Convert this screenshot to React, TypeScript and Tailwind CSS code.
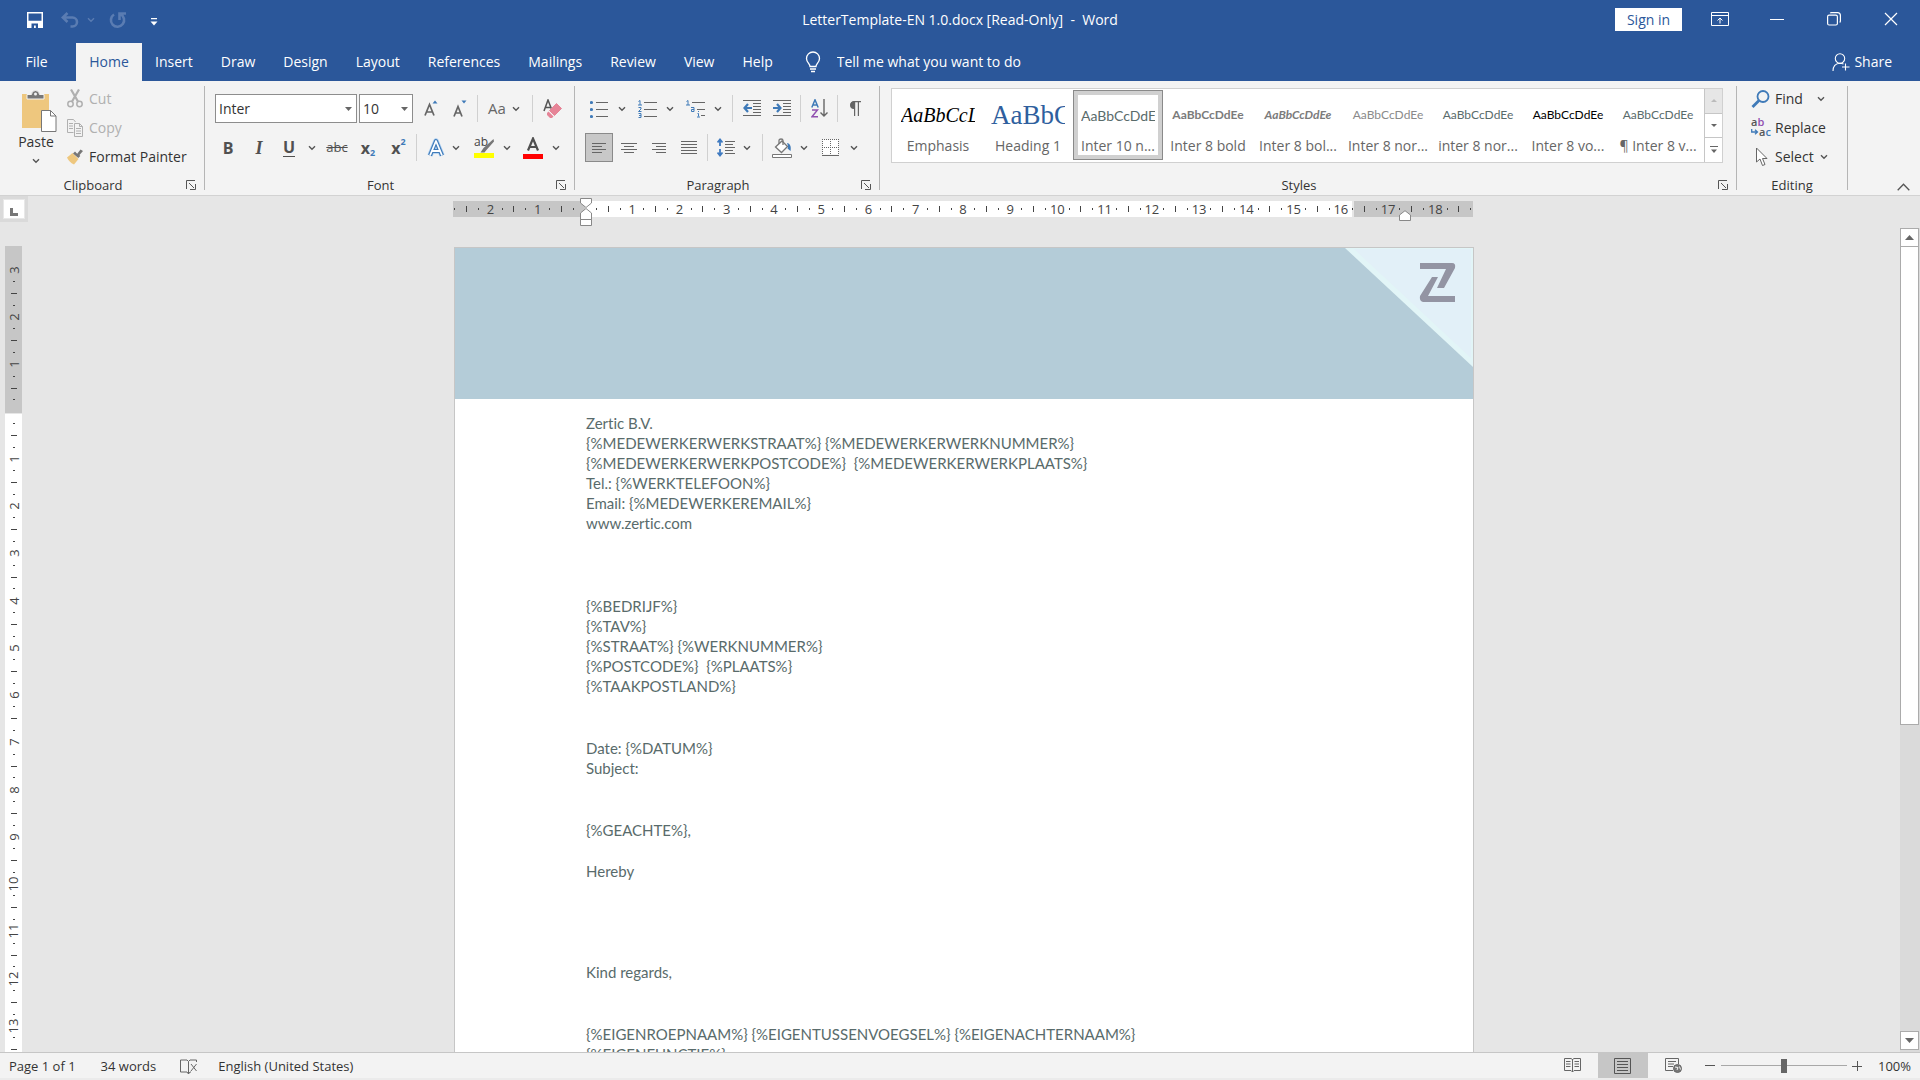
import type { ReactNode } from "react";
import { clsx } from "clsx";

const tabs = ["Insert", "Draw", "Design", "Layout", "References", "Mailings", "Review", "View", "Help"];

const styleItems = [
  { name: "Emphasis", sample: "AaBbCcLl", look: "font-['Liberation_Serif',serif] italic text-[20px] text-black" },
  { name: "Heading 1", sample: "AaBbCc", look: "font-['Liberation_Serif',serif] text-[27px] text-[#2f5f9e]" },
  { name: "Inter 10 n...", sample: "AaBbCcDdEe", look: "font-[Lato,sans-serif] text-[14px] text-[#596b6b]", active: true },
  { name: "Inter 8 bold", sample: "AaBbCcDdEe", look: "justify-center font-[Lato,sans-serif] text-[12px] font-bold text-[#7b7b7b]" },
  { name: "Inter 8 bol...", sample: "AaBbCcDdEe", look: "justify-center font-[Lato,sans-serif] text-[12px] font-bold italic text-[#7b7b7b]" },
  { name: "Inter 8 nor...", sample: "AaBbCcDdEe", look: "justify-center font-[Lato,sans-serif] text-[12px] text-[#8a8a8a]" },
  { name: "inter 8 nor...", sample: "AaBbCcDdEe", look: "justify-center font-[Lato,sans-serif] text-[12px] text-[#596b6b]" },
  { name: "Inter 8 vo...", sample: "AaBbCcDdEe", look: "justify-center font-[Lato,sans-serif] text-[12px] text-black" },
  { name: "¶ Inter 8 v...", sample: "AaBbCcDdEe", look: "justify-center font-[Lato,sans-serif] text-[12px] text-[#596b6b]" },
];

const letter = [
  {
    gap: "mt-0",
    lines: [
      "Zertic B.V.",
      "{%MEDEWERKERWERKSTRAAT%} {%MEDEWERKERWERKNUMMER%}",
      "{%MEDEWERKERWERKPOSTCODE%}  {%MEDEWERKERWERKPLAATS%}",
      "Tel.: {%WERKTELEFOON%}",
      "Email: {%MEDEWERKEREMAIL%}",
      "www.zertic.com",
    ],
  },
  {
    gap: "mt-[63px]",
    lines: [
      "{%BEDRIJF%}",
      "{%TAV%}",
      "{%STRAAT%} {%WERKNUMMER%}",
      "{%POSTCODE%}  {%PLAATS%}",
      "{%TAAKPOSTLAND%}",
    ],
  },
  { gap: "mt-[42px]", lines: ["Date: {%DATUM%}", "Subject:"] },
  { gap: "mt-[42px]", lines: ["{%GEACHTE%},"] },
  { gap: "mt-[21px]", lines: ["Hereby"] },
  { gap: "mt-[81px]", lines: ["Kind regards,"] },
  {
    gap: "mt-[42px]",
    lines: ["{%EIGENROEPNAAM%} {%EIGENTUSSENVOEGSEL%} {%EIGENACHTERNAAM%}", "{%EIGENFUNCTIE%}"],
  },
];

// quarter-centimetre marks, counted from the margin
function marks(from: number, count: number) {
  return Array.from({ length: count }, (_, i) => {
    const q = from + i;
    if (q === 0) return "";
    if (q % 4 === 0) return String(Math.abs(q / 4));
    return q % 2 === 0 ? "|" : ".";
  });
}

const hMarks = marks(-11, 87);
const vMarks = marks(-12, 67);

function Chevron({ className = "text-[#555]" }: { className?: string }) {
  return (
    <svg width="8" height="6" viewBox="0 0 8 6" className={className} fill="none" stroke="currentColor" strokeWidth="1.4">
      <path d="M1 1.2l3 3 3-3" />
    </svg>
  );
}

function Drop({ label, className = "w-3.5" }: { label: string; className?: string }) {
  return (
    <button aria-label={label} className={clsx("flex h-[29px] shrink-0 items-center justify-center", className)}>
      <Chevron />
    </button>
  );
}

function Tool({ label, className = "w-[30px]", children }: { label: string; className?: string; children: ReactNode }) {
  return (
    <button aria-label={label} className={clsx("flex h-[29px] shrink-0 items-center justify-center text-[#505050]", className)}>
      {children}
    </button>
  );
}

function Sep({ className }: { className: string }) {
  return <span className={clsx("h-[27px] w-px shrink-0 bg-[#d0d0d0]", className)} />;
}

function Group({ label, className, launcher = true, children }: { label: string; className: string; launcher?: boolean; children: ReactNode }) {
  return (
    <section className={clsx("flex", className)}>
      <div className="flex min-w-0 flex-1 flex-col">
        <div className="h-[94px]">{children}</div>
        <div className="flex h-5 items-center">
          <span className="flex-1 text-center text-[13px] leading-5 text-[#333]">{label}</span>
          {launcher && (
            <button aria-label={`${label} settings`} className="flex w-[18px] text-[#555]">
              <svg width="10" height="10" viewBox="0 0 10 10" fill="none" stroke="currentColor">
                <path d="M.5 9V.5H9M3 3l5 5M9.500 4v5.500H4" />
              </svg>
            </button>
          )}
        </div>
      </div>
      <span className="mt-[5px] h-[104px] w-px bg-[#b5b5b5]" />
    </section>
  );
}

function TitleBar() {
  return (
    <div className="grid h-[43px] grid-cols-[1fr_auto_1fr] items-start text-sm">
      <div className="flex h-10 items-center pl-[27px]">
        <button aria-label="Save">
          <svg width="16" height="16" viewBox="0 0 16 16" fill="none" stroke="#fff" strokeWidth="1.500">
            <path d="M.75.75h14.500v14.500H.75zM1 9.500h14" />
            <path d="M1 10h14v5H1z" fill="#fff" stroke="none" />
            <path d="M4.500 11.500h6.500V16H8.800v-2.500H7V16H4.500z" fill="#2b579a" stroke="none" />
          </svg>
        </button>
        <button aria-label="Undo" className="ml-[18px] text-[#5a7cb2]">
          <svg width="18" height="16" viewBox="0 0 18 16" fill="none" stroke="currentColor" strokeWidth="2.600">
            <path d="M6.500 1L1.800 5.500l4.700 4.500M2 5.500h9.500a4.500 4.500 0 0 1 0 9H9.500" />
          </svg>
        </button>
        <button aria-label="Undo list" className="ml-2">
          <Chevron className="text-[#5a7cb2]" />
        </button>
        <button aria-label="Repeat" className="ml-[14px] text-[#5a7cb2]">
          <svg width="18" height="17" viewBox="0 0 18 17" fill="none" stroke="currentColor" strokeWidth="2.600">
            <path d="M5 2.500a6.600 6.600 0 1 0 6.500-.3M10.500 8V1.500H17" />
          </svg>
        </button>
        <button aria-label="Customize toolbar" className="ml-[23px] mt-1">
          <svg width="8" height="8" viewBox="0 0 8 8" fill="#fff">
            <path d="M1 0h6v1.300H1zM.5 3.500h7L4 7.500z" />
          </svg>
        </button>
      </div>
      <h1 className="h-10 whitespace-pre leading-10">LetterTemplate-EN 1.0.docx [Read-Only]  -  Word</h1>
      <div className="flex h-[38px] items-center justify-end pr-[22px]">
        <button className="h-[23px] w-[67px] bg-white text-center leading-[23px] text-[#2b579a]">Sign in</button>
        <button aria-label="Ribbon display options" className="ml-[29px]">
          <svg width="18" height="14" viewBox="0 0 18 14" fill="none" stroke="#fff">
            <path d="M.5.5h17v13H.5zM.5 3.500h17M9 11.500V6M6.500 8.500L9 6l2.500 2.500" />
          </svg>
        </button>
        <button aria-label="Minimize" className="ml-[41px] h-3 w-3.5">
          <span className="block h-px w-full bg-white" />
        </button>
        <button aria-label="Restore" className="ml-[43px]">
          <svg width="14" height="14" viewBox="0 0 14 14" fill="none" stroke="#fff" strokeWidth="1.200">
            <rect x=".6" y="3.200" width="9.800" height="9.800" rx="1.500" />
            <path d="M3.200 1.200c.3-.4.800-.6 1.300-.6h6c1.600 0 2.900 1.300 2.900 2.900v5.500c0 .6-.3 1.100-.7 1.400" />
          </svg>
        </button>
        <button aria-label="Close" className="ml-[43px]">
          <svg width="14" height="14" viewBox="0 0 14 14" stroke="#fff" strokeWidth="1.200">
            <path d="M1 1l12 12M13 1L1 13" />
          </svg>
        </button>
      </div>
    </div>
  );
}

function TabBar() {
  return (
    <nav className="flex h-[38px] items-center pr-7 text-sm">
      <button className="w-[76px] pr-[3px] text-center">File</button>
      <button className="h-full w-[66px] bg-[#f3f3f3] text-center text-[#2b579a]">Home</button>
      <div className="flex gap-7 pl-[13px]">
        {tabs.map((tab) => (
          <button key={tab}>{tab}</button>
        ))}
      </div>
      <label htmlFor="tell-me" className="ml-8">
        <span className="sr-only">Tell me what you want to do</span>
        <svg width="16" height="22" viewBox="0 0 16 22" fill="none" stroke="#fff" strokeWidth="1.300">
          <path d="M5 15.500c0-3-3.500-4-3.500-8a6.500 6.500 0 0 1 13 0c0 4-3.500 5-3.500 8zM5 18h6M6 20.500h4" />
        </svg>
      </label>
      <input
        id="tell-me"
        placeholder="Tell me what you want to do"
        className="ml-4 w-60 bg-transparent outline-none placeholder:text-white"
      />
      <button className="ml-auto flex items-center gap-1">
        <svg width="18" height="18" viewBox="0 0 18 18" fill="none" stroke="#fff" strokeWidth="1.100">
          <circle cx="8" cy="5.500" r="4.700" />
          <path d="M1 18c0-4.500 2.500-7.500 7-7.800 1.500 0 2.500.3 3.500.8M13.500 10.500v7M10 14h7.500" />
        </svg>
        Share
      </button>
    </nav>
  );
}

function Clipboard() {
  return (
    <Group label="Clipboard" className="w-[205px]">
      <div className="flex pt-[3px]">
        <button className="ml-[11px] flex w-[50px] flex-col items-center pt-1.5 text-sm leading-5 text-[#333]">
          <svg width="36" height="42" viewBox="0 0 36 42" className="ml-1.5">
            <path d="M1 4h27v34H1z" fill="#eec77e" />
            <path d="M6 9V4.500h4.500a4 4 0 0 1 8 0H23V9z" fill="#777" stroke="#f3f3f3" strokeWidth="1" />
            <circle cx="14.500" cy="4" r="1.500" fill="#f3f3f3" />
            <path d="M20.500 20.500h9l5.500 5.500v15.500H20.500z" fill="#fff" stroke="#777" />
            <path d="M29.500 20.500V26H35" fill="none" stroke="#777" />
          </svg>
          Paste
          <span className="mt-1.5">
            <Chevron />
          </span>
        </button>
        <div className="ml-1.5 flex flex-col text-sm">
          <button className="flex h-[29px] items-center gap-1.5 text-[#b0b0b0]" disabled>
            <svg width="16" height="19" viewBox="0 0 16 19" fill="none" stroke="currentColor" strokeWidth="1.500">
              <circle cx="3.500" cy="15" r="2.700" />
              <circle cx="12.500" cy="15" r="2.700" />
              <path d="M5 12.500L12 .5M11 12.500L4 .5" strokeWidth="2.200" />
            </svg>
            Cut
          </button>
          <button className="flex h-[29px] items-center gap-1.5 text-[#b0b0b0]" disabled>
            <svg width="16" height="18" viewBox="0 0 16 18" fill="none" stroke="currentColor">
              <path d="M6.500 13.500h-6V.5h6l2 2.500M2 4.500h4M2 7h4M2 9.500h4" />
              <path d="M7.500 4.500h5l3 3v10h-8zM12.500 4.500v3h3M9 9.500h5M9 12h5M9 14.500h5" />
            </svg>
            Copy
          </button>
          <button className="flex h-[29px] items-center gap-1.5 whitespace-nowrap text-[#333]">
            <svg width="16" height="16" viewBox="0 0 16 16">
              <path d="M0 8.500L5.500 4l6 6L7 15.500C3.500 14 1.500 11.500 0 8.500z" fill="#eec77e" />
              <path d="M6 4.500l2-2 2.200 2.200L13.500.5 16 2l-3.500 4 .8 1-2 2z" fill="#777" />
            </svg>
            Format Painter
          </button>
        </div>
      </div>
    </Group>
  );
}

function Combo({ label, value, className }: { label: string; value: string; className: string }) {
  return (
    <div className={clsx("relative h-[29px] shrink-0", className)}>
      <select aria-label={label} className="size-full appearance-none border border-[#8d8d8d] bg-white px-[3px] text-sm text-[#333]">
        <option>{value}</option>
      </select>
      <svg width="7" height="4" viewBox="0 0 7 4" fill="#666" className="pointer-events-none absolute right-[5px] top-[13px]">
        <path d="M0 0h7L3.500 4z" />
      </svg>
    </div>
  );
}

function FontGroup() {
  return (
    <Group label="Font" className="w-[370px]">
      <div className="flex items-center pl-2.5 pt-[13px]">
        <Combo label="Font" value="Inter" className="w-[142px]" />
        <Combo label="Font size" value="10" className="ml-0.5 w-[54px]" />
        <Tool label="Grow font" className="ml-1 w-7">
          <svg width="14" height="17" viewBox="0 0 14 17" fill="none" stroke="#666" strokeWidth="1.700">
            <path d="M1 15.500L5.500 4.500l4.500 11M2.500 12h6" />
            <path d="M8.500 3.500h5L11 .5z" fill="#3f7ab8" stroke="none" />
          </svg>
        </Tool>
        <Tool label="Shrink font" className="ml-px w-7">
          <svg width="14" height="17" viewBox="0 0 14 17" fill="none" stroke="#666" strokeWidth="1.700">
            <path d="M1 16.500L5 6.500l4 10M2.500 13h5" />
            <path d="M8.500.5h5L11 3.500z" fill="#3f7ab8" stroke="none" />
          </svg>
        </Tool>
        <Sep className="ml-[3px]" />
        <button aria-label="Change case" className="ml-2.5 flex h-[29px] w-8 items-center justify-between text-[15px] text-[#666]">
          Aa
          <Chevron />
        </button>
        <Sep className="ml-3" />
        <Tool label="Clear formatting" className="ml-[5px] w-[30px]">
          <svg width="20" height="20" viewBox="0 0 20 20" fill="none">
            <path d="M1 12L5 1l3.500 9M2.500 8.500h5" stroke="#555" strokeWidth="1.500" />
            <path d="M13.500 4.500l5 5-7 7-5-5z" fill="#e68497" stroke="#e68497" strokeLinejoin="round" />
            <path d="M5.500 12.500l5 5-1.500 1.500H7L4 16v-2z" fill="#e68497" />
          </svg>
        </Tool>
      </div>
      <div className="flex items-center pl-2 pt-2.5">
        <Tool label="Bold"><b className="text-base">B</b></Tool>
        <Tool label="Italic" className="w-8"><span className="font-['Liberation_Serif',serif] text-lg font-bold italic">I</span></Tool>
        <Tool label="Underline" className="w-7"><span className="border-b border-[#505050] text-base font-bold leading-[17px]">U</span></Tool>
        <Drop label="Underline styles" className="w-[18px]" />
        <Tool label="Strikethrough" className="w-8"><s className="text-[13px]">abc</s></Tool>
        <Tool label="Subscript" className="w-[30px]">
          <b className="text-base">x</b><b className="pt-2.5 text-[9px] text-[#3f7ab8]">2</b>
        </Tool>
        <Tool label="Superscript" className="ml-px w-[29px]">
          <b className="text-base">x</b><b className="pb-3 text-[9px] text-[#3f7ab8]">2</b>
        </Tool>
        <Sep className="ml-[3px]" />
        <Tool label="Text effects" className="ml-1 w-[29px]">
          <svg width="18" height="20" viewBox="0 0 18 20" fill="none" strokeLinejoin="round">
            <path d="M3 17.500L9 3l6 14.500M5.500 13h7" stroke="#a9cdf0" strokeWidth="5.500" />
            <path d="M3 17.500L9 3l6 14.500M5.500 13h7" stroke="#3f7ab8" strokeWidth="4" />
            <path d="M3 17.500L9 3l6 14.500M5.500 13h7" stroke="#fff" strokeWidth="1.800" />
          </svg>
        </Tool>
        <Drop label="Text effect styles" className="w-3" />
        <Tool label="Highlight" className="ml-[7px] w-[30px]">
          <svg width="21" height="21" viewBox="0 0 21 21">
            <text x="0" y="9" fontSize="12" fill="#444">ab</text>
            <path d="M19.500 2l-10 9-3 4.500h4l1.500-2 8-9z" fill="#777" />
            <path d="M0 16h20v5H0z" fill="#ff0" />
          </svg>
        </Tool>
        <Drop label="Highlight color" className="w-4" />
        <Tool label="Font color" className="ml-[3px] w-[30px]">
          <svg width="20" height="22" viewBox="0 0 20 22">
            <path d="M5 13.500L10 1.500l5 12M6.500 10h7" fill="none" stroke="#505050" strokeWidth="2.200" />
            <path d="M0 17h20v5H0z" fill="#f00" />
          </svg>
        </Tool>
        <Drop label="Font colors" className="w-4" />
      </div>
    </Group>
  );
}

function Lines({ d, width = 18 }: { d: string; width?: number }) {
  return (
    <svg width={width} height="16" viewBox={`0 0 ${width} 16`} fill="none" stroke="#666">
      <path d={d} />
    </svg>
  );
}

function Paragraph() {
  return (
    <Group label="Paragraph" className="w-[305px]">
      <div className="flex items-center pl-2 pt-[13px]">
        <Tool label="Bullets" className="w-8">
          <svg width="18" height="18" viewBox="0 0 18 18" stroke="#666">
            <path d="M6 2.500h12M6 9.500h12M6 16.500h12" />
            <g fill="#3f7ab8" stroke="none">
              <circle cx="1.500" cy="2.500" r="1.600" />
              <circle cx="1.500" cy="9.500" r="1.600" />
              <circle cx="1.500" cy="16.500" r="1.600" />
            </g>
          </svg>
        </Tool>
        <Drop label="Bullet library" />
        <Tool label="Numbering" className="ml-0.5 w-8">
          <svg width="19" height="18" viewBox="0 0 19 18" stroke="#666">
            <path d="M6 2.500h13M6 9.500h13M6 16.500h13" />
            <g fill="none" stroke="#3f7ab8">
              <path d="M.5 1.500L2 .5v4.500M0 5h4M.5 7.500h2.500v1.500L.5 11.500h3M.5 13.500H3v4H.5M1 15.500h2" />
            </g>
          </svg>
        </Tool>
        <Drop label="Number library" />
        <Tool label="Multilevel list" className="ml-0.5 w-8">
          <svg width="19" height="18" viewBox="0 0 19 18" stroke="#666" fill="none">
            <path d="M6 2.500h13M11 9.500h8M15 15.500h4" />
            <path d="M.5 1.500L2 .5v4.500M0 5h4M5 7.500h3v4H5.500v-2H8M12.500 11v1M11.500 13.500h1v3M11 17h3" stroke="#3f7ab8" />
          </svg>
        </Tool>
        <Drop label="List library" />
        <Sep className="ml-[7px]" />
        <Tool label="Decrease indent" className="ml-1 w-[30px]">
          <svg width="18" height="17" viewBox="0 0 18 17" stroke="#666" fill="none">
            <path d="M0 .5h18M10 3.500h8M10 6.500h8M10 9.500h8M10 12.500h8M0 15.500h18" />
            <path d="M9 8H1.500M5 4L1.500 8 5 12" stroke="#3f7ab8" strokeWidth="2.200" />
          </svg>
        </Tool>
        <Tool label="Increase indent">
          <svg width="18" height="17" viewBox="0 0 18 17" stroke="#666" fill="none">
            <path d="M0 .5h18M10 3.500h8M10 6.500h8M10 9.500h8M10 12.500h8M0 15.500h18" />
            <path d="M0 8h7.500M4 4l3.500 4L4 12" stroke="#3f7ab8" strokeWidth="2.200" />
          </svg>
        </Tool>
        <Sep className="ml-[3px]" />
        <Tool label="Sort" className="ml-1 w-[30px]">
          <svg width="18" height="19" viewBox="0 0 18 19" fill="none">
            <path d="M.8 8.500L4 .8l3.200 7.700M2 6h4" stroke="#3f7ab8" strokeWidth="1.500" />
            <path d="M1 11h5.500L1 17.700h6" stroke="#9150b0" strokeWidth="1.400" />
            <path d="M13 0v17M9.500 13.500L13 17l3.500-3.500" stroke="#666" strokeWidth="1.400" />
          </svg>
        </Tool>
        <Sep className="ml-0.5" />
        <Tool label="Show paragraph marks" className="ml-0.5 w-[30px]">
          <svg width="12" height="15" viewBox="0 0 12 15" fill="none" stroke="#666" strokeWidth="1.200">
            <path d="M12 .6H5v6.500M5.600 1v14M9.400 1v14" />
            <path d="M5 .6a3.400 3.400 0 0 0 0 6.800z" fill="#666" />
          </svg>
        </Tool>
      </div>
      <div className="flex items-center pl-2.5 pt-2.5">
        <Tool label="Align left" className="w-[28px] border border-[#8a8a8a] bg-[#c8c8c8]">
          <Lines width={14} d="M0 3.500h14M0 6.500h10M0 9.500h14M0 12.500h10" />
        </Tool>
        <Tool label="Center" className="ml-px w-[30px]">
          <Lines width={16} d="M0 3.500h16M3 6.500h10M0 9.500h16M3 12.500h10" />
        </Tool>
        <Tool label="Align right">
          <Lines width={14} d="M0 3.500h14M4 6.500h10M0 9.500h14M4 12.500h10" />
        </Tool>
        <Tool label="Justify">
          <Lines width={16} d="M0 1.500h16M0 4.500h16M0 7.500h16M0 10.500h16M0 13.500h16" />
        </Tool>
        <Sep className="ml-[3px]" />
        <Tool label="Line spacing" className="ml-[3px] w-[30px]">
          <svg width="18" height="19" viewBox="0 0 18 19" fill="none" stroke="#666">
            <path d="M8 3.500h10M8 6.500h8M8 9.500h10M8 12.500h8M8 15.500h10" />
            <path d="M3 2v6M3 11v6M.5 4.500L3 1.500l2.500 3M.5 14.500l2.500 3 2.500-3" stroke="#3f7ac0" strokeWidth="1.800" />
          </svg>
        </Tool>
        <Drop label="Spacing options" className="w-3" />
        <Sep className="ml-[9px]" />
        <Tool label="Shading" className="ml-1 w-[30px]">
          <svg width="20" height="20" viewBox="0 0 20 20" fill="none" stroke="#777">
            <path d="M3.500 9L10 3l5.500 5.500-6 6z" fill="#fff" strokeWidth="1.300" />
            <path d="M7 6V2.500C7 .5 11 .5 11 2.500V7" strokeWidth="1.300" />
            <path d="M15 5c3 .5 4.500 3.500 3.500 8l-3-2.500c1-1.500.5-3-.5-5.500z" fill="#3f7ab8" stroke="none" />
            <path d="M.5 16.500h19v3H.5z" fill="#fff" />
          </svg>
        </Tool>
        <Drop label="Shading colors" />
        <Tool label="Borders" className="ml-1 w-[30px]">
          <svg width="17" height="17" viewBox="0 0 17 17" fill="none" stroke="#666">
            <path d="M.5.5h16v15H.5z" fill="#fff" stroke="none" />
            <path d="M0 .5h17M0 8.500h17M.5 0v16M8.500 0v16M16.500 0v16" strokeDasharray="1 1" />
            <path d="M0 16.500h17" />
          </svg>
        </Tool>
        <Drop label="Border styles" className="w-[18px]" />
      </div>
    </Group>
  );
}

function Styles() {
  return (
    <Group label="Styles" className="min-w-0 flex-1">
      <div className="pl-[11px] pr-[13px] pt-[7px]">
        <div className="flex h-[75px] border border-[#d0d0d0] bg-white">
          <div className="flex min-w-0 flex-1 overflow-hidden p-px">
            {styleItems.map((item, i) => (
              <button
                key={i}
                className={clsx(
                  "flex h-[70px] w-[90px] shrink-0 flex-col items-center",
                  item.active && "shadow-[inset_0_0_0_1px_#8a8a8a,inset_0_0_0_5px_#d0d0d0]"
                )}
              >
                <span className={clsx("mt-[9px] flex h-8 w-[74px] items-center overflow-hidden whitespace-nowrap", item.look)}>
                  {item.sample}
                </span>
                <span className="mt-[3px] whitespace-nowrap text-sm leading-6 text-[#666]">{item.name}</span>
              </button>
            ))}
          </div>
          <div className="flex w-[18px] flex-col divide-y divide-[#c6c6c6] border-l border-[#c6c6c6]">
            <button aria-label="Previous row" className="flex flex-1 items-center justify-center bg-[#e6e6e6]">
              <svg width="6" height="3" fill="#bbb"><path d="M0 3h6L3 0z" /></svg>
            </button>
            <button aria-label="Next row" className="flex flex-1 items-center justify-center">
              <svg width="6" height="3" fill="#666"><path d="M0 0h6L3 3z" /></svg>
            </button>
            <button aria-label="All styles" className="flex flex-1 items-center justify-center">
              <svg width="8" height="8" fill="#666"><path d="M0 0h8v1H0zM1 3.500h6L4 7z" /></svg>
            </button>
          </div>
        </div>
      </div>
    </Group>
  );
}

function Editing() {
  return (
    <Group label="Editing" className="w-[111px]" launcher={false}>
      <div className="flex flex-col pl-[14px] pt-[3px] text-sm text-[#333]">
        <button className="flex h-[29px] items-center">
          <svg width="20" height="18" viewBox="0 0 20 18" fill="none" stroke="#3f7ab8">
            <circle cx="12" cy="6.500" r="5.500" strokeWidth="1.800" />
            <path d="M8 10.500L1.500 17" strokeWidth="2.800" />
          </svg>
          <span className="ml-1 mr-[14px]">Find</span>
          <Chevron />
        </button>
        <button className="flex h-[29px] items-center">
          <svg width="20" height="20" viewBox="0 0 20 20" fontSize="11" fontWeight="600">
            <text x="0" y="8" fill="#555">a<tspan fill="#9150b0">b</tspan></text>
            <text x="8" y="18" fill="#555">a<tspan fill="#3f7ab8">c</tspan></text>
            <path d="M.7 11v3h5.500M4 11.700L6.500 14 4 16.300" fill="none" stroke="#3f7ab8" strokeWidth="1.300" />
          </svg>
          <span className="ml-1">Replace</span>
        </button>
        <button className="flex h-[29px] items-center">
          <svg width="20" height="20" viewBox="0 0 20 20" fill="#fff" stroke="#666">
            <path d="M5.500 1v14l3.500-3 2.500 6.500 2.500-1-2.500-6h4.500z" />
          </svg>
          <span className="ml-1 mr-1.5">Select</span>
          <Chevron />
        </button>
      </div>
    </Group>
  );
}

function HorizontalRuler() {
  return (
    <div className="flex h-8 items-start">
      <button aria-label="Tab selector" className="h-[26px] w-7 bg-[#dadada] p-[3px]">
        <span className="flex h-5 w-[22px] items-center justify-center border border-[#e8e8e8] bg-white">
          <span className="mt-1.5 size-2 border-b-3 border-l-3 border-[#777]" />
        </span>
      </button>
      <div className="flex min-w-0 flex-1 justify-center pr-0.5 pt-[5px]">
        <div className="relative grid h-4 w-[1020px] shrink-0">
          <div className="col-start-1 row-start-1 flex">
            <span className="w-[132px] bg-[#c6c6c6]" />
            <span className="mr-0.5 flex-1 bg-white" />
            <span className="w-[119px] bg-[#c6c6c6]" />
          </div>
          <div className="col-start-1 row-start-1 flex min-w-0 justify-center overflow-hidden">
            <div className="flex w-[1028px] shrink-0 items-center text-[13px] leading-4 text-[#444]">
              {hMarks.map((mark, i) => (
                <span key={i} className="flex min-w-0 flex-1 basis-0 items-center justify-center">
                  {mark === "|" ? <i className="h-1.5 w-px bg-[#444]" /> : mark === "." ? <i className="h-0.5 w-px bg-[#444]" /> : mark}
                </span>
              ))}
            </div>
          </div>
          <svg width="12" height="28" viewBox="0 0 12 28" className="absolute -top-[3px] left-[127px]" fill="#fff" stroke="#888">
            <path d="M.5.5h11V5L6 9.500.5 5zM.5 21.500V15L6 10.500l5.500 4.500v6.500zM.5 21.500h11v6H.5z" />
          </svg>
          <svg width="12" height="11" viewBox="0 0 12 11" className="absolute right-[62px] top-[9px]" fill="#fff" stroke="#888">
            <path d="M.5 10.500V5L6 .7 11.500 5v5.500z" />
          </svg>
        </div>
      </div>
      <span className="w-5" />
    </div>
  );
}

function VerticalRuler() {
  return (
    <div className="w-7 shrink-0 overflow-hidden pl-[5px] pt-[18px]">
      <div className="grid h-full w-[17px]">
        <div className="col-start-1 row-start-1 flex flex-col">
          <span className="mb-px h-[167px] bg-[#c6c6c6]" />
          <span className="flex-1 bg-white" />
        </div>
        <div className="col-start-1 row-start-1 flex h-[809px] flex-col pt-[18px] text-[13px] leading-4 text-[#444]">
          {vMarks.map((mark, i) => (
            <span key={i} className="flex min-h-0 flex-1 basis-0 items-center justify-center">
              {mark === "|" ? <i className="h-px w-1.5 bg-[#444]" /> : mark === "." ? <i className="h-px w-0.5 bg-[#444]" /> : <span className="-rotate-90">{mark}</span>}
            </span>
          ))}
        </div>
      </div>
    </div>
  );
}

function Page() {
  return (
    <article className="mt-[19px] w-[1020px] shrink-0 self-start border border-[#c6c6c6] bg-white">
      <header className="flex h-[151px] justify-end bg-[#b4ccd8]">
        <svg width="128" height="119" viewBox="0 0 128 119">
          <path d="M0 0h128v119z" fill="#e2f5f7" />
          <path d="M9 1h117v109z" fill="#e2f0f8" />
          <g fill="#9394a3">
            <path d="M75 15h32q4 0 3 5l-11 20h-7l9-19H75z" />
            <path d="M87 29h6L83 48h27v6H78q-4-1-3-6z" />
          </g>
        </svg>
      </header>
      <div className="pb-20 pl-[131px] pt-[14px] font-[Lato,sans-serif] text-[15px] leading-5 text-[#596b6b] [font-variant-ligatures:none]">
        {letter.map((block, i) => (
          <div key={i} className={block.gap}>
            {block.lines.map((line) => (
              <p key={line} className="whitespace-pre">{line}</p>
            ))}
          </div>
        ))}
      </div>
    </article>
  );
}

function ScrollBar() {
  return (
    <div className="flex w-5 shrink-0 flex-col bg-[#dadada] pb-0.5 pr-px">
      <button aria-label="Scroll up" className="flex h-[19px] items-center justify-center border border-[#ababab] bg-white">
        <svg width="9" height="5" fill="#666"><path d="M0 5h9L4.500 0z" /></svg>
      </button>
      <div className="flex-1">
        <div className="h-[61%] border border-t-0 border-[#ababab] bg-white" />
      </div>
      <button aria-label="Scroll down" className="flex h-[19px] items-center justify-center border border-[#ababab] bg-white">
        <svg width="9" height="5" fill="#666"><path d="M0 0h9L4.500 5z" /></svg>
      </button>
    </div>
  );
}

function StatusBar() {
  return (
    <footer className="flex h-7 shrink-0 items-stretch border-t border-[#c6c6c6] border-b-2 border-b-[#ebebeb] bg-[#f3f3f3] text-[13px] text-[#333]">
      <div className="flex items-center pl-[9px] pt-0.5">
        <button>Page 1 of 1</button>
        <button className="ml-[25px]">34 words</button>
        <button aria-label="Proofing" className="ml-6">
          <svg width="17" height="16" viewBox="0 0 17 16" fill="none" stroke="#666">
            <path d="M8.500 2.500L7 1H.5v12H7l1.500 2 1.500-2h1M8.500 2.500V15M8.500 2.500L10 1h6.500v2M11 5l5.500 7M16.500 5L11 12" />
          </svg>
        </button>
        <button className="ml-[21px]">English (United States)</button>
      </div>
      <div className="ml-auto flex items-center pr-[9px]">
        <button aria-label="Read mode" className="flex w-[51px] justify-center">
          <svg width="17" height="15" viewBox="0 0 17 15" fill="none" stroke="#666">
            <path d="M.5.500H7l1.500 1 1.500-1h6.500v12H10l-1.500 1.500L7 12.500H.5zM8.500 1v13M2 3.500h4.500M2 6h4.500M2 8.500h4.500M10.500 3.500H15M10.500 6H15M10.500 8.500H15" />
          </svg>
        </button>
        <button aria-label="Print layout" className="flex h-[25px] w-[50px] items-center justify-center bg-[#c6c6c6]">
          <svg width="17" height="16" viewBox="0 0 17 16" fill="none" stroke="#555">
            <path d="M.5.500h16v15H.5zM3 3.500h11M3 6.500h11M3 9.500h11M3 12.500h11" />
          </svg>
        </button>
        <button aria-label="Web layout" className="flex w-[51px] justify-center">
          <svg width="17" height="15" viewBox="0 0 17 15" fill="none" stroke="#666">
            <path d="M8 12.500H.5V.5h13V6M3 3.500h8M3 6h6M3 8.500h5" />
            <circle cx="12.500" cy="10.500" r="4" fill="#777" />
            <path d="M10 9l3 .5-1 2.500M14.500 8.500l1 3" stroke="#f3f3f3" />
          </svg>
        </button>
        <button aria-label="Zoom out" className="ml-1.5 w-2.5">
          <span className="block h-px bg-[#555]" />
        </button>
        <label className="ml-1.5 flex items-center">
          <span className="sr-only">Zoom</span>
          <input
            type="range"
            min="0"
            max="100"
            defaultValue="50"
            className="h-3.5 w-[126px] appearance-none bg-[linear-gradient(#a8a8a8,#a8a8a8)] bg-size-[100%_1px] bg-center bg-no-repeat [&::-webkit-slider-thumb]:h-3.5 [&::-webkit-slider-thumb]:w-1.5 [&::-webkit-slider-thumb]:appearance-none [&::-webkit-slider-thumb]:bg-[#666]"
          />
        </label>
        <button aria-label="Zoom in" className="ml-[5px]">
          <svg width="10" height="10" stroke="#555"><path d="M0 5.500h10M5.500 0v10" /></svg>
        </button>
        <button className="ml-4 pt-0.5">100%</button>
      </div>
    </footer>
  );
}

export default function App() {
  return (
    <div className="flex h-screen flex-col overflow-hidden bg-[#e6e6e6] font-['Open_Sans',sans-serif]">
      <header className="shrink-0 bg-[#2b579a] text-white">
        <TitleBar />
        <TabBar />
      </header>
      <div className="flex h-[115px] shrink-0 border-b border-[#d2d2d2] bg-[#f3f3f3]">
        <Clipboard />
        <FontGroup />
        <Paragraph />
        <Styles />
        <Editing />
        <div className="flex w-[72px] items-end justify-end pb-1 pr-2.5">
          <button aria-label="Collapse ribbon">
            <svg width="13" height="8" viewBox="0 0 13 8" fill="none" stroke="#555" strokeWidth="1.300">
              <path d="M.7 7.300l5.800-6 5.800 6" />
            </svg>
          </button>
        </div>
      </div>
      <main className="flex min-h-0 flex-1 flex-col">
        <HorizontalRuler />
        <div className="flex min-h-0 flex-1">
          <VerticalRuler />
          <div className="flex min-w-0 flex-1 justify-center overflow-hidden">
            <Page />
          </div>
          <ScrollBar />
        </div>
      </main>
      <StatusBar />
    </div>
  );
}
